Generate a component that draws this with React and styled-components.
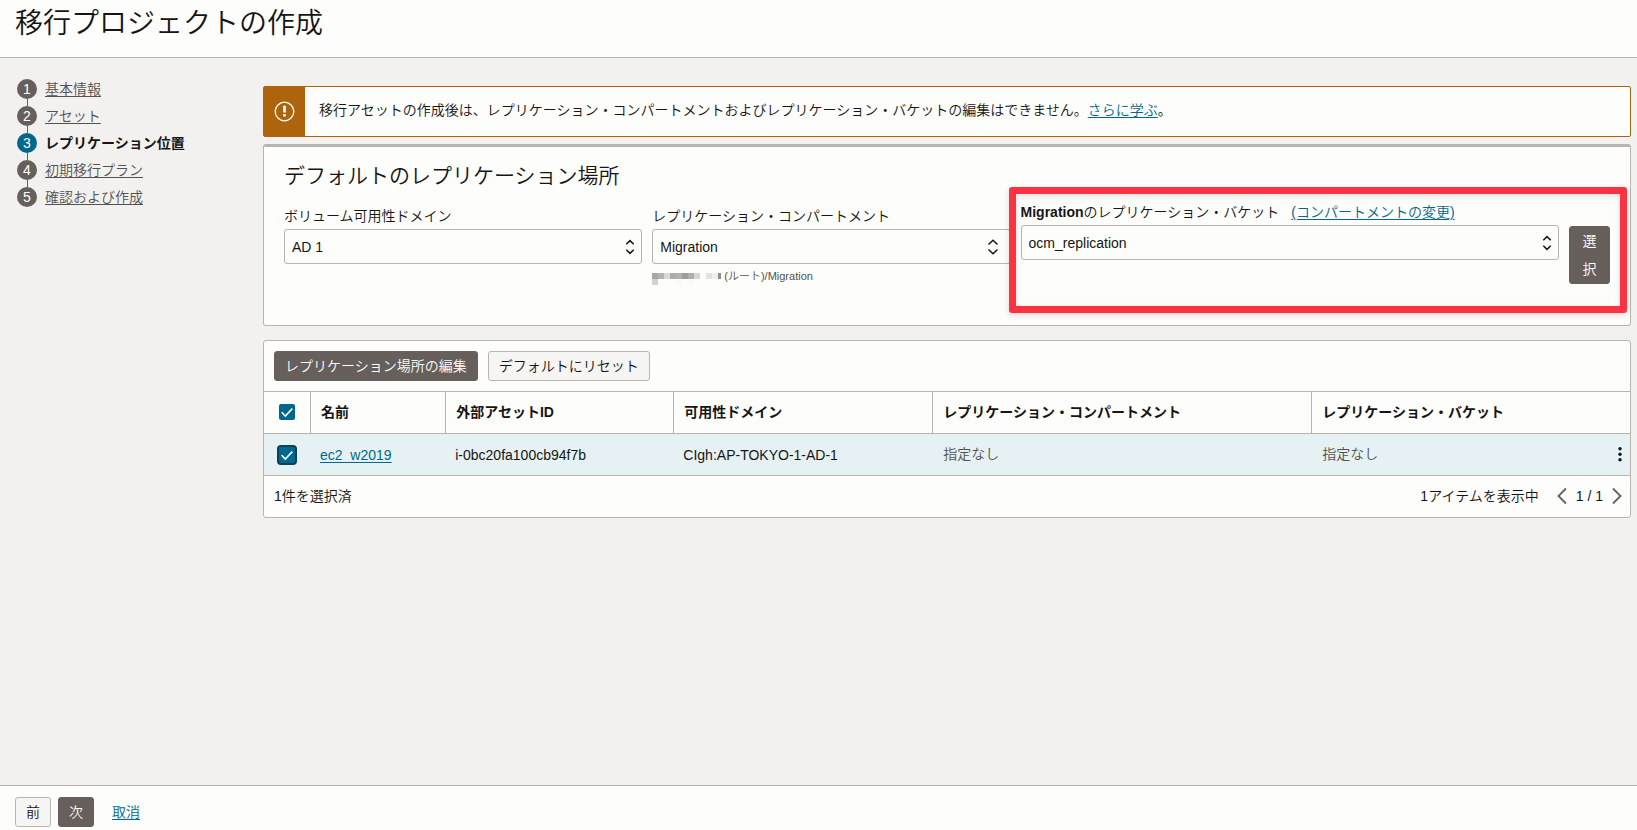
import React from "react";
import styled, { createGlobalStyle, css } from "styled-components";

const color = {
  ink: "#161513",
  muted: "#545250",
  page: "#f3f1f0",
  surface: "#fdfdfc",
  line: "#bab4ae",
  dark: "#665f5b",
  blue: "#00688c",
  amber: "#ae640c",
  row: "#e6f1f4",
  red: "#fa3241",
};

const GlobalStyle = createGlobalStyle`
  *, *::before, *::after { box-sizing: border-box; }
  body {
    margin: 0;
    background: ${color.page};
    color: ${color.ink};
    font-family: "Liberation Sans", "Noto Sans CJK JP", sans-serif;
    font-size: 14px;
    font-weight: 350;
    line-height: 20px;
  }
`;

const Page = styled.div`
  display: flex;
  flex-direction: column;
  min-height: 100vh;
`;

const Header = styled.header`
  height: 58px;
  padding: 4px 15px 0;
  background: ${color.surface};
  border-bottom: 1px solid ${color.line};
`;

const Title = styled.h1`
  margin: 0;
  font-size: 28px;
  line-height: 40px;
  font-weight: 350;
`;

const Body = styled.div`
  display: flex;
  flex: 1;
  padding: 0 6px 24px 17px;
`;

const Steps = styled.ol`
  display: flex;
  flex-direction: column;
  gap: 7px;
  flex: 0 0 246px;
  margin: 0;
  padding: 21px 0 0;
  list-style: none;
`;

const Step = styled.li`
  position: relative;
  display: flex;
  gap: 8px;
  height: 20px;

  & + &::before {
    content: "";
    position: absolute;
    left: 10px;
    bottom: 100%;
    width: 1px;
    height: 7px;
    background: ${color.dark};
  }
`;

const StepNumber = styled.span`
  width: 20px;
  height: 20px;
  border-radius: 50%;
  background: ${(p) => (p.$current ? color.blue : color.dark)};
  color: #fff;
  text-align: center;
`;

const CurrentStep = styled.strong`
  font-weight: 700;
`;

const StepLink = styled.a`
  color: ${color.muted};
  text-decoration: underline;
  text-underline-offset: 2px;
`;

const Main = styled.main`
  flex: 1;
  min-width: 0;
  padding-top: 28px;
`;

const Link = styled.a`
  color: ${color.blue};
  text-decoration: underline;
  text-underline-offset: 2px;
`;

const Notice = styled.div`
  display: flex;
  height: 51px;
  margin-bottom: 7px;
  border: 1px solid ${color.amber};
  border-radius: 2px;
  background: ${color.surface};
`;

const NoticeIcon = styled.div`
  display: flex;
  align-items: center;
  justify-content: center;
  width: 41px;
  background: ${color.amber};
`;

const NoticeText = styled.p`
  margin: 0;
  padding: 13px 14px;
`;

const Panel = styled.section`
  border: 1px solid ${color.line};
  border-radius: 3px;
  background: ${color.surface};
`;

const LocationPanel = styled(Panel)`
  min-height: 182px;
  margin-bottom: 14px;
  padding: 13px 20px 0;
  border-top-width: 3px;
`;

const PanelTitle = styled.h2`
  margin: 0 0 14px;
  font-size: 21px;
  line-height: 32px;
  font-weight: 350;
`;

const Fields = styled.div`
  display: grid;
  grid-template-columns: 358fr 358fr 589fr;
  gap: 10px;
  align-items: start;
`;

const Field = styled.div`
  min-width: 0;
`;

const HighlightedField = styled(Field)`
  position: relative;
  margin-top: -4px;

  &::after {
    content: "";
    position: absolute;
    top: -15px;
    left: -12px;
    right: -17px;
    height: 126px;
    border: 7px solid ${color.red};
    border-radius: 3px;
    box-shadow: 0 2px 6px rgba(0, 0, 0, 0.15), inset 0 2px 6px rgba(0, 0, 0, 0.12);
    pointer-events: none;
  }
`;

const LabelRow = styled.div`
  display: flex;
  gap: 12px;
  margin-bottom: 3px;
  line-height: 20px;
  white-space: nowrap;
`;

const SelectRow = styled.div`
  display: flex;
  align-items: flex-start;
  gap: 10px;
`;

const SelectBox = styled.div`
  position: relative;
  flex: 1;

  svg {
    position: absolute;
    top: 10px;
    right: ${(p) => (p.$wide ? 12 : 6)}px;
    pointer-events: none;
  }
`;

const Select = styled.select`
  display: block;
  width: 100%;
  height: 35px;
  padding: 0 28px 0 7px;
  appearance: none;
  border: 1px solid ${color.line};
  border-radius: 3px;
  background: ${color.surface};
  color: ${color.ink};
  font: inherit;
`;

const Path = styled.div`
  display: flex;
  gap: 3px;
  margin-top: 3px;
  color: ${color.muted};
  font-size: 11px;
  line-height: 18px;
`;

const buttonKinds = {
  primary: css`
    border-color: ${color.dark};
    background: ${color.dark};
    color: ${color.surface};
  `,
  secondary: css`
    border-color: ${color.line};
    background: #f6f5f4;
    color: ${color.ink};
  `,
};

const Button = styled.button`
  padding: 0 10px;
  border: 1px solid;
  border-radius: 3px;
  font: inherit;
  line-height: 28px;
  cursor: pointer;
  ${(p) => buttonKinds[p.$kind]}
`;

const PickButton = styled(Button)`
  width: 41px;
  margin-top: 1px;
`;

const Toolbar = styled.div`
  display: flex;
  gap: 10px;
  padding: 10px;
`;

const Table = styled.table`
  width: 100%;
  table-layout: fixed;
  border-collapse: separate;
  border-spacing: 0;
`;

const HeadCell = styled.th`
  height: 42px;
  padding: 0 10px 2px;
  border-top: 1px solid ${color.line};
  border-left: 1px solid ${color.line};
  text-align: left;
  font-weight: 700;

  &:first-child { border-left: 0; }
`;

const Cell = styled.td`
  height: 42px;
  padding: ${(p) => (p.$muted ? "0 8px 2px 11px" : "0 10px")};
  border-top: 1px solid ${color.line};
  background: ${color.row};
  color: ${(p) => (p.$muted ? color.muted : color.ink)};
`;

const CellSplit = styled.div`
  display: flex;
  align-items: center;
  justify-content: space-between;
`;

const IconButton = styled.button`
  display: flex;
  padding: 0;
  border: 0;
  background: none;
  color: ${color.ink};
  cursor: pointer;
`;

const CheckWrap = styled.span`
  position: relative;
  display: block;
  width: 16px;
  height: 16px;
  margin: 0 auto;

  svg {
    position: absolute;
    inset: 0;
    pointer-events: none;
  }
`;

const CheckInput = styled.input`
  display: block;
  width: 16px;
  height: 16px;
  margin: 0;
  appearance: none;
  border-radius: 2px;
  background: ${color.blue};
  box-shadow: ${(p) => (p.$focused ? "0 0 0 2px #0b4256" : "none")};
`;

const TableFooter = styled.div`
  display: flex;
  align-items: center;
  justify-content: space-between;
  height: 42px;
  padding: 0 7px 2px 10px;
  border-top: 1px solid ${color.line};
`;

const Pager = styled.div`
  display: flex;
  align-items: center;
  gap: 8px;
`;

const PageCount = styled.span`
  margin-right: 9px;
`;

const Actions = styled.footer`
  display: flex;
  align-items: center;
  gap: 7px;
  height: 45px;
  padding: 8px 15px 0;
  border-top: 1px solid ${color.line};
  background: ${color.surface};
`;

const CancelLink = styled(Link)`
  margin-left: 11px;
`;

function UpDownIcon({ wide }) {
  return (
    <svg width="12" height="16" viewBox="0 0 12 16" fill="none" stroke={color.ink} strokeWidth="1.5" aria-hidden="true">
      {wide ? <path d="M1.5 5.5 6 1.3l4.5 4.2M1.5 10.5 6 14.7l4.5-4.2" /> : <path d="M2.3 5.3 6 1.6l3.7 3.7M2.3 10.7 6 14.4l3.7-3.7" />}
    </svg>
  );
}

function Checkbox({ label, focused }) {
  return (
    <CheckWrap>
      <CheckInput type="checkbox" defaultChecked aria-label={label} $focused={focused} />
      <svg width="16" height="16" viewBox="0 0 16 16" fill="none" stroke="#fff" strokeWidth="1.6" aria-hidden="true">
        <path d="M2.7 8.2 6.3 12 13.3 4.6" />
      </svg>
    </CheckWrap>
  );
}

function Chevron({ d }) {
  return (
    <svg width="12" height="18" viewBox="0 0 12 18" fill="none" stroke={color.dark} strokeWidth="1.8" aria-hidden="true">
      <path d={d} />
    </svg>
  );
}

const mosaic = [
  ["#a9a7a6", "#b3b2b1", "#dad9d8", "#adacab", "#b3b1b0", "#a09e9d", "#b0aead", "#d5d4d3", "", "#e3e2e1", "#f0efee", "#8f8d8c"],
  ["#d2d1d0", "", "", "", "#fbfafa", "", "#fbfafa"],
];

function MaskedName() {
  return (
    <svg width="69" height="12" viewBox="0 0 69 12" aria-hidden="true">
      {mosaic.map((row, y) =>
        row.map((fill, x) =>
          fill ? (
            <rect key={`${x}-${y}`} x={x === 11 ? 66 : x * 6} y={y * 6} width={x === 11 ? 3 : 6} height="6" fill={fill} />
          ) : null
        )
      )}
    </svg>
  );
}

const MaskSlot = styled.span`
  display: flex;
  padding-top: 6px;
`;

const steps = ["基本情報", "アセット", "レプリケーション位置", "初期移行プラン", "確認および作成"];

export default function App() {
  return (
    <>
      <GlobalStyle />
      <Page>
        <Header>
          <Title>移行プロジェクトの作成</Title>
        </Header>
        <Body>
          <Steps>
            {steps.map((name, i) => (
              <Step key={name}>
                <StepNumber $current={i === 2}>{i + 1}</StepNumber>
                {i === 2 ? <CurrentStep aria-current="step">{name}</CurrentStep> : <StepLink href="#">{name}</StepLink>}
              </Step>
            ))}
          </Steps>
          <Main>
            <Notice>
              <NoticeIcon>
                <svg width="22" height="22" viewBox="0 0 22 22" fill="none" stroke="#fff" aria-hidden="true">
                  <circle cx="10.5" cy="10.5" r="9.3" strokeWidth="1.3" />
                  <path d="M10.5 4.8v6.7M10.5 13v2.4" strokeWidth="2.6" />
                </svg>
              </NoticeIcon>
              <NoticeText>
                移行アセットの作成後は、レプリケーション・コンパートメントおよびレプリケーション・バケットの編集はできません。<Link href="#">さらに学ぶ</Link>。
              </NoticeText>
            </Notice>

            <LocationPanel>
              <PanelTitle>デフォルトのレプリケーション場所</PanelTitle>
              <Fields>
                <Field>
                  <LabelRow>
                    <label htmlFor="domain">ボリューム可用性ドメイン</label>
                  </LabelRow>
                  <SelectBox>
                    <Select id="domain">
                      <option>AD 1</option>
                    </Select>
                    <UpDownIcon />
                  </SelectBox>
                </Field>
                <Field>
                  <LabelRow>
                    <label htmlFor="compartment">レプリケーション・コンパートメント</label>
                  </LabelRow>
                  <SelectBox $wide>
                    <Select id="compartment">
                      <option>Migration</option>
                    </Select>
                    <UpDownIcon wide />
                  </SelectBox>
                  <Path>
                    <MaskSlot>
                      <MaskedName />
                    </MaskSlot>
                    <span>(ルート)/Migration</span>
                  </Path>
                </Field>
                <HighlightedField>
                  <LabelRow>
                    <label htmlFor="bucket">
                      <CurrentStep>Migration</CurrentStep>のレプリケーション・バケット
                    </label>
                    <Link href="#">(コンパートメントの変更)</Link>
                  </LabelRow>
                  <SelectRow>
                    <SelectBox>
                      <Select id="bucket">
                        <option>ocm_replication</option>
                      </Select>
                      <UpDownIcon />
                    </SelectBox>
                    <PickButton type="button" $kind="primary">選択</PickButton>
                  </SelectRow>
                </HighlightedField>
              </Fields>
            </LocationPanel>

            <Panel>
              <Toolbar>
                <Button type="button" $kind="primary">レプリケーション場所の編集</Button>
                <Button type="button" $kind="secondary">デフォルトにリセット</Button>
              </Toolbar>
              <Table>
                <colgroup>
                  <col width="46" />
                  <col width="9.9%" />
                  <col width="16.7%" />
                  <col width="18.95%" />
                  <col width="27.75%" />
                  <col />
                </colgroup>
                <thead>
                  <tr>
                    <HeadCell>
                      <Checkbox label="すべて選択" />
                    </HeadCell>
                    <HeadCell>名前</HeadCell>
                    <HeadCell>外部アセットID</HeadCell>
                    <HeadCell>可用性ドメイン</HeadCell>
                    <HeadCell>レプリケーション・コンパートメント</HeadCell>
                    <HeadCell>レプリケーション・バケット</HeadCell>
                  </tr>
                </thead>
                <tbody>
                  <tr>
                    <Cell>
                      <Checkbox label="ec2_w2019" focused />
                    </Cell>
                    <Cell>
                      <Link href="#">ec2_w2019</Link>
                    </Cell>
                    <Cell>i-0bc20fa100cb94f7b</Cell>
                    <Cell>CIgh:AP-TOKYO-1-AD-1</Cell>
                    <Cell $muted>指定なし</Cell>
                    <Cell $muted>
                      <CellSplit>
                        <span>指定なし</span>
                        <IconButton type="button" aria-label="アクション">
                          <svg width="4" height="16" viewBox="0 0 4 16" fill={color.ink} aria-hidden="true">
                            <circle cx="2" cy="2.8" r="1.7" />
                            <circle cx="2" cy="8.3" r="1.7" />
                            <circle cx="2" cy="13.8" r="1.7" />
                          </svg>
                        </IconButton>
                      </CellSplit>
                    </Cell>
                  </tr>
                </tbody>
              </Table>
              <TableFooter>
                <span>1件を選択済</span>
                <Pager>
                  <PageCount>1アイテムを表示中</PageCount>
                  <IconButton type="button" aria-label="前のページ">
                    <Chevron d="M10 1.5 2.5 9l7.5 7.5" />
                  </IconButton>
                  <span>1 / 1</span>
                  <IconButton type="button" aria-label="次のページ">
                    <Chevron d="M2 1.5 9.5 9 2 16.5" />
                  </IconButton>
                </Pager>
              </TableFooter>
            </Panel>
          </Main>
        </Body>
        <Actions>
          <Button type="button" $kind="secondary">前</Button>
          <Button type="button" $kind="primary">次</Button>
          <CancelLink href="#">取消</CancelLink>
        </Actions>
      </Page>
    </>
  );
}
